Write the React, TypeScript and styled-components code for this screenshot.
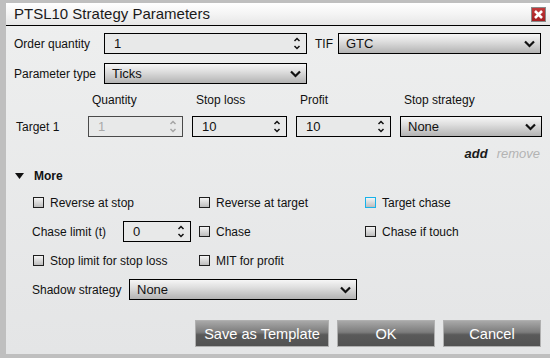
import React from 'react';
import styled, { createGlobalStyle } from 'styled-components';

const GlobalStyle = createGlobalStyle`
    html, body {
        margin: 0;
        padding: 0;
        background: #bfbfbf;
    }
    body {
        font-family: "Liberation Sans", Arial, sans-serif;
        font-size: 12px;
        color: #111;
    }
`

const Dialog = styled.div`
    margin: 3px 0 0 6px;
    width: 544px;
    height: 351px;
    box-sizing: border-box;
    background: linear-gradient(to bottom, #eeefef 0%, #e4e5e6 100%);
    display: flex;
    flex-direction: column;
`

const TitleBar = styled.div`
    height: 23px;
    box-sizing: border-box;
    border-bottom: 1px solid #000;
    background: linear-gradient(to bottom, #ffffff 0%, #f4f4f4 50%, #e6e6e6 100%);
    display: flex;
    align-items: center;
    justify-content: space-between;
    padding: 0 4px 0 8px;
    .title{
        font-size: 15px;
        color: #1a1a1a;
        line-height: 20px;
    }
`

const CloseBtn = styled.div`
    width: 15px;
    height: 15px;
    box-sizing: border-box;
    border: 1px solid #8a8a8a;
    background: linear-gradient(to bottom, #c2393a 0%, #a41f22 100%);
    display: flex;
    align-items: center;
    justify-content: center;
    margin-top: 1px;
`

const Body = styled.div`
    padding: 7px 9px 7px 8px;
    display: flex;
    flex-direction: column;
`

const Row = styled.div<{ $mt?: number }>`
    display: flex;
    align-items: center;
    margin-top: ${p => p.$mt || 0}px;
`

const Label = styled.div<{ $w?: number; $pl?: number }>`
    width: ${p => p.$w ? `${p.$w}px` : 'auto'};
    padding-left: ${p => p.$pl || 0}px;
    flex-shrink: 0;
    white-space: nowrap;
`

const Box = styled.div<{ $w: number; $h?: number; $disabled?: boolean }>`
    width: ${p => p.$w}px;
    height: ${p => p.$h || 21}px;
    box-sizing: border-box;
    border: 1px solid ${p => p.$disabled ? '#4a4a4a' : '#000'};
    background: #e8e9e9;
    display: flex;
    align-items: center;
    justify-content: space-between;
    padding: 0 5px 0 9px;
    color: ${p => p.$disabled ? '#a9a9a9' : '#111'};
    font-size: 13px;
    flex-shrink: 0;
`

const Select = styled.div<{ $w: number; $h?: number }>`
    width: ${p => p.$w}px;
    height: ${p => p.$h || 21}px;
    box-sizing: border-box;
    border: 1px solid #000;
    background: linear-gradient(to bottom, #f6f6f6 0%, #dedede 40%, #b3b3b3 100%);
    display: flex;
    align-items: center;
    justify-content: space-between;
    padding: 0 5px 0 7px;
    font-size: 13px;
    flex-shrink: 0;
`

const TargetGrid = styled.div<{ $mt: number }>`
    display: grid;
    grid-template-columns: 65px 95px 95px 95px 142px;
    column-gap: 9px;
    align-items: center;
    margin-top: ${p => p.$mt}px;
    .head{
        padding-left: 4px;
        height: 16px;
        line-height: 16px;
    }
    .tlabel{
        padding-left: 2px;
    }
`

const Links = styled.div`
    display: flex;
    justify-content: flex-end;
    gap: 9px;
    padding-right: 1px;
    margin-top: 9px;
    height: 16px;
    line-height: 16px;
    font-style: italic;
    font-weight: bold;
    font-size: 13px;
    .add{ color: #1a1a1a; }
    .remove{ color: #b3b3b3; font-weight: normal; }
`

const MoreHeader = styled.div`
    display: flex;
    align-items: center;
    gap: 10px;
    margin-top: 6px;
    height: 16px;
    font-weight: bold;
    padding-left: 1px;
`

const OptionGrid = styled.div`
    display: grid;
    grid-template-columns: 166px 166px 166px;
    grid-auto-rows: 21px;
    row-gap: 8px;
    margin-top: 8px;
    padding-left: 19px;
    align-items: center;
`

const CheckItem = styled.label`
    display: flex;
    align-items: center;
    gap: 6px;
    white-space: nowrap;
`

const CheckBox = styled.span<{ $focus?: boolean }>`
    width: 11px;
    height: 11px;
    box-sizing: border-box;
    border: 1px solid ${p => p.$focus ? '#18b2ea' : '#1e1e1e'};
    background: linear-gradient(to bottom, #f4f4f4 0%, #bdbdbd 100%);
    display: inline-block;
    flex-shrink: 0;
`

const ChaseCell = styled.div`
    display: flex;
    align-items: center;
    margin-left: -1px;
    .lbl{ width: 91px; }
`

const ShadowRow = styled.div`
    display: flex;
    align-items: center;
    margin-top: 8px;
    padding-left: 18px;
    .lbl{ width: 97px; }
`

const ButtonBar = styled.div`
    display: flex;
    justify-content: flex-end;
    gap: 8px;
    margin-top: 20px;
`

const Button = styled.div<{ $w: number }>`
    width: ${p => p.$w}px;
    height: 27px;
    box-sizing: border-box;
    border: 1px solid #b0b0b0;
    background: linear-gradient(to bottom, #a8a8a8 0%, #7c7c7c 45%, #5a5a5a 55%, #525252 100%);
    color: #fff;
    font-size: 14.6px;
    display: flex;
    align-items: center;
    justify-content: center;
`

const Chevron = () => <svg width="11" height="8" viewBox="0 0 11 8">
    <path d="M1 1.5 L5.5 6 L10 1.5" fill="none" stroke="#111" strokeWidth="2.2" />
</svg>

const Spin: React.FC<{ disabled?: boolean }> = ({ disabled }) => {
    const c = disabled ? '#a5a5a5' : '#111';
    return <svg width="8" height="15" viewBox="0 0 8 15">
        <path d="M1.5 5 L4 2.5 L6.5 5" fill="none" stroke={c} strokeWidth="1.5" />
        <path d="M1.5 10 L4 12.5 L6.5 10" fill="none" stroke={c} strokeWidth="1.5" />
    </svg>
}

const SpinBox: React.FC<{ w: number; value: string; disabled?: boolean; h?: number }> = ({ w, value, disabled, h }) =>
    <Box $w={w} $h={h} $disabled={disabled}>
        <span>{value}</span>
        <Spin disabled={disabled} />
    </Box>

const Dropdown: React.FC<{ w: number; value: string; h?: number }> = ({ w, value, h }) =>
    <Select $w={w} $h={h}>
        <span>{value}</span>
        <Chevron />
    </Select>

const Check: React.FC<{ label: string; focus?: boolean }> = ({ label, focus }) =>
    <CheckItem>
        <CheckBox $focus={focus} />
        <span>{label}</span>
    </CheckItem>

const App: React.FC = () => {
    return <>
        <GlobalStyle />
        <Dialog>
            <TitleBar>
                <div className="title">PTSL10 Strategy Parameters</div>
                <CloseBtn>
                    <svg width="11" height="11" viewBox="0 0 11 11">
                        <path d="M2 2 L9 9 M9 2 L2 9" stroke="#fff" strokeWidth="2.6" />
                    </svg>
                </CloseBtn>
            </TitleBar>
            <Body>
                <Row>
                    <Label $w={90}>Order quantity</Label>
                    <SpinBox w={203} value="1" />
                    <Label $w={23} $pl={8}>TIF</Label>
                    <Dropdown w={203} value="GTC" />
                </Row>
                <Row $mt={9}>
                    <Label $w={90}>Parameter type</Label>
                    <Dropdown w={203} value="Ticks" />
                </Row>
                <TargetGrid $mt={8}>
                    <div />
                    <div className="head">Quantity</div>
                    <div className="head">Stop loss</div>
                    <div className="head">Profit</div>
                    <div className="head">Stop strategy</div>
                </TargetGrid>
                <TargetGrid $mt={8}>
                    <div className="tlabel">Target 1</div>
                    <SpinBox w={95} value="1" disabled />
                    <SpinBox w={95} value="10" />
                    <SpinBox w={95} value="10" />
                    <Dropdown w={142} value="None" />
                </TargetGrid>
                <Links>
                    <span className="add">add</span>
                    <span className="remove">remove</span>
                </Links>
                <MoreHeader>
                    <svg width="9" height="6" viewBox="0 0 9 6">
                        <path d="M0 0 H9 L4.5 6 Z" fill="#111" />
                    </svg>
                    <span>More</span>
                </MoreHeader>
                <OptionGrid>
                    <Check label="Reverse at stop" />
                    <Check label="Reverse at target" />
                    <Check label="Target chase" focus />
                    <ChaseCell>
                        <span className="lbl">Chase limit (t)</span>
                        <SpinBox w={68} value="0" />
                    </ChaseCell>
                    <Check label="Chase" />
                    <Check label="Chase if touch" />
                    <Check label="Stop limit for stop loss" />
                    <Check label="MIT for profit" />
                    <div />
                </OptionGrid>
                <ShadowRow>
                    <span className="lbl">Shadow strategy</span>
                    <Dropdown w={228} value="None" />
                </ShadowRow>
                <ButtonBar>
                    <Button $w={134}>Save as Template</Button>
                    <Button $w={98}>OK</Button>
                    <Button $w={98}>Cancel</Button>
                </ButtonBar>
            </Body>
        </Dialog>
    </>
}

export default App;
